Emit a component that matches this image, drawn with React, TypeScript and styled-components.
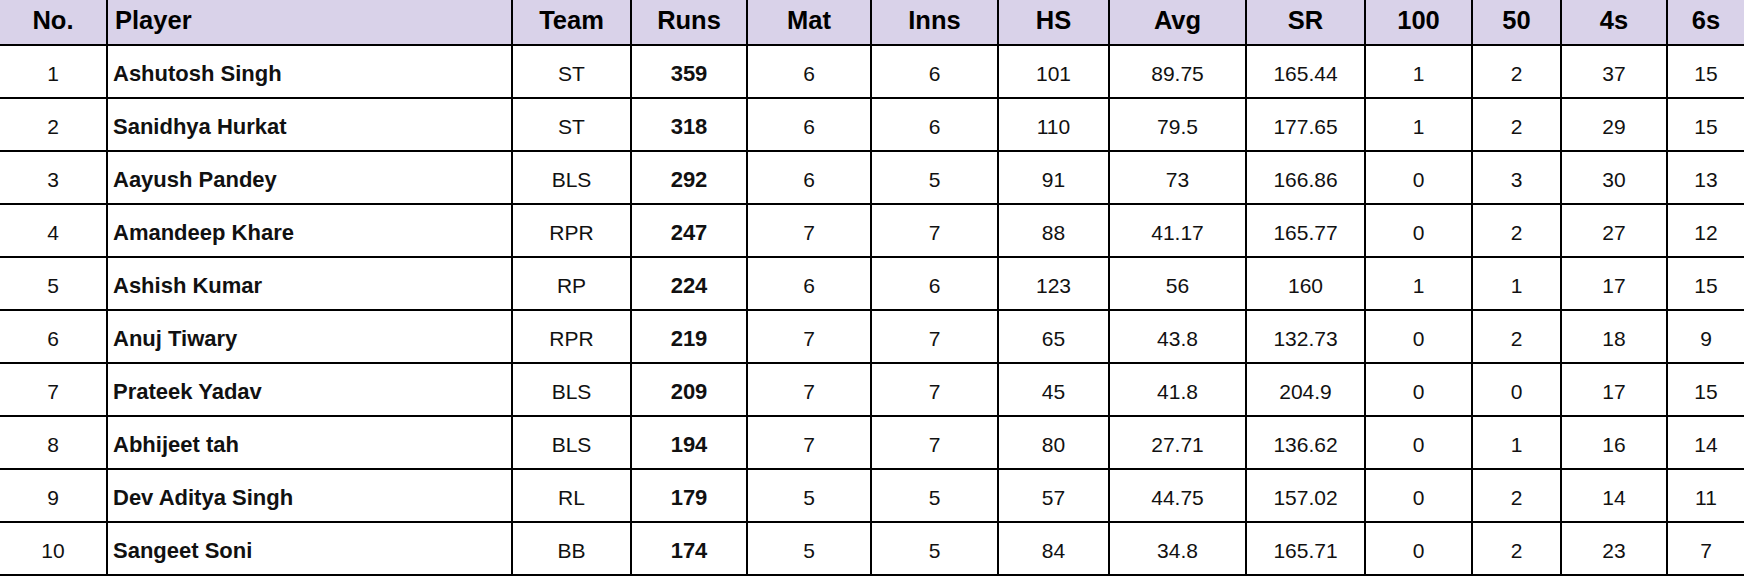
import React from 'react';
import styled, { createGlobalStyle } from 'styled-components';

const GlobalStyle = createGlobalStyle`
  html, body {
    margin: 0;
    padding: 0;
    background: #ffffff;
  }
  body {
    font-family: "Liberation Sans", Arial, sans-serif;
    color: #000;
  }
`;

type Column = { key: string; label: string; width: number; align?: 'left' | 'center'; bold?: boolean };

const columns: Column[] = [
  { key: 'no', label: 'No.', width: 108 },
  { key: 'player', label: 'Player', width: 405, align: 'left', bold: true },
  { key: 'team', label: 'Team', width: 119 },
  { key: 'runs', label: 'Runs', width: 116, bold: true },
  { key: 'mat', label: 'Mat', width: 124 },
  { key: 'inns', label: 'Inns', width: 127 },
  { key: 'hs', label: 'HS', width: 111 },
  { key: 'avg', label: 'Avg', width: 137 },
  { key: 'sr', label: 'SR', width: 119 },
  { key: 'hundreds', label: '100', width: 107 },
  { key: 'fifties', label: '50', width: 89 },
  { key: 'fours', label: '4s', width: 106 },
  { key: 'sixes', label: '6s', width: 76 },
];

const rows: string[][] = [
  ['1', 'Ashutosh Singh', 'ST', '359', '6', '6', '101', '89.75', '165.44', '1', '2', '37', '15'],
  ['2', 'Sanidhya Hurkat', 'ST', '318', '6', '6', '110', '79.5', '177.65', '1', '2', '29', '15'],
  ['3', 'Aayush Pandey', 'BLS', '292', '6', '5', '91', '73', '166.86', '0', '3', '30', '13'],
  ['4', 'Amandeep Khare', 'RPR', '247', '7', '7', '88', '41.17', '165.77', '0', '2', '27', '12'],
  ['5', 'Ashish Kumar', 'RP', '224', '6', '6', '123', '56', '160', '1', '1', '17', '15'],
  ['6', 'Anuj Tiwary', 'RPR', '219', '7', '7', '65', '43.8', '132.73', '0', '2', '18', '9'],
  ['7', 'Prateek Yadav', 'BLS', '209', '7', '7', '45', '41.8', '204.9', '0', '0', '17', '15'],
  ['8', 'Abhijeet tah', 'BLS', '194', '7', '7', '80', '27.71', '136.62', '0', '1', '16', '14'],
  ['9', 'Dev Aditya Singh', 'RL', '179', '5', '5', '57', '44.75', '157.02', '0', '2', '14', '11'],
  ['10', 'Sangeet Soni', 'BB', '174', '5', '5', '84', '34.8', '165.71', '0', '2', '23', '7'],
];

const gridTemplate = columns.map((c) => `${c.width}px`).join(' ');

const Table = styled.div`
  width: 1744px;
  height: 576px;
  overflow: hidden;
  display: flex;
  flex-direction: column;
`;

const Row = styled.div<{ $header?: boolean }>`
  display: grid;
  grid-template-columns: ${gridTemplate};
  height: ${({ $header }) => ($header ? '46px' : '53px')};
  background: ${({ $header }) => ($header ? '#d9d2e9' : '#ffffff')};
  flex-shrink: 0;
`;

const Cell = styled.div<{ $align?: 'left' | 'center'; $bold?: boolean; $header?: boolean; $last?: boolean }>`
  box-sizing: border-box;
  display: flex;
  align-items: center;
  justify-content: ${({ $align }) => ($align === 'left' ? 'flex-start' : 'center')};
  padding-left: ${({ $align, $header }) => ($align === 'left' ? ($header ? '7px' : '5px') : '0')};
  padding-top: ${({ $header }) => ($header ? '0' : '5px')};
  padding-bottom: ${({ $header }) => ($header ? '4px' : '0')};
  border-right: ${({ $last }) => ($last ? 'none' : '2px solid #000')};
  border-bottom: 2px solid #000;
  font-size: ${({ $header, $bold }) => ($header ? '25.5px' : $bold ? '22px' : '21px')};
  font-weight: ${({ $bold, $header }) => ($bold || $header ? 700 : 400)};
  color: ${({ $header }) => ($header ? '#000' : '#111')};
  white-space: nowrap;
`;

export default function App() {
  return (
    <>
      <GlobalStyle />
      <Table>
        <Row $header>
          {columns.map((c, i) => (
            <Cell key={c.key} $header $align={c.align} $last={i === columns.length - 1}>
              {c.label}
            </Cell>
          ))}
        </Row>
        {rows.map((r) => (
          <Row key={r[0]}>
            {r.map((value, i) => (
              <Cell
                key={columns[i].key}
                $align={columns[i].align}
                $bold={columns[i].bold}
                $last={i === columns.length - 1}
              >
                {value}
              </Cell>
            ))}
          </Row>
        ))}
      </Table>
    </>
  );
}
